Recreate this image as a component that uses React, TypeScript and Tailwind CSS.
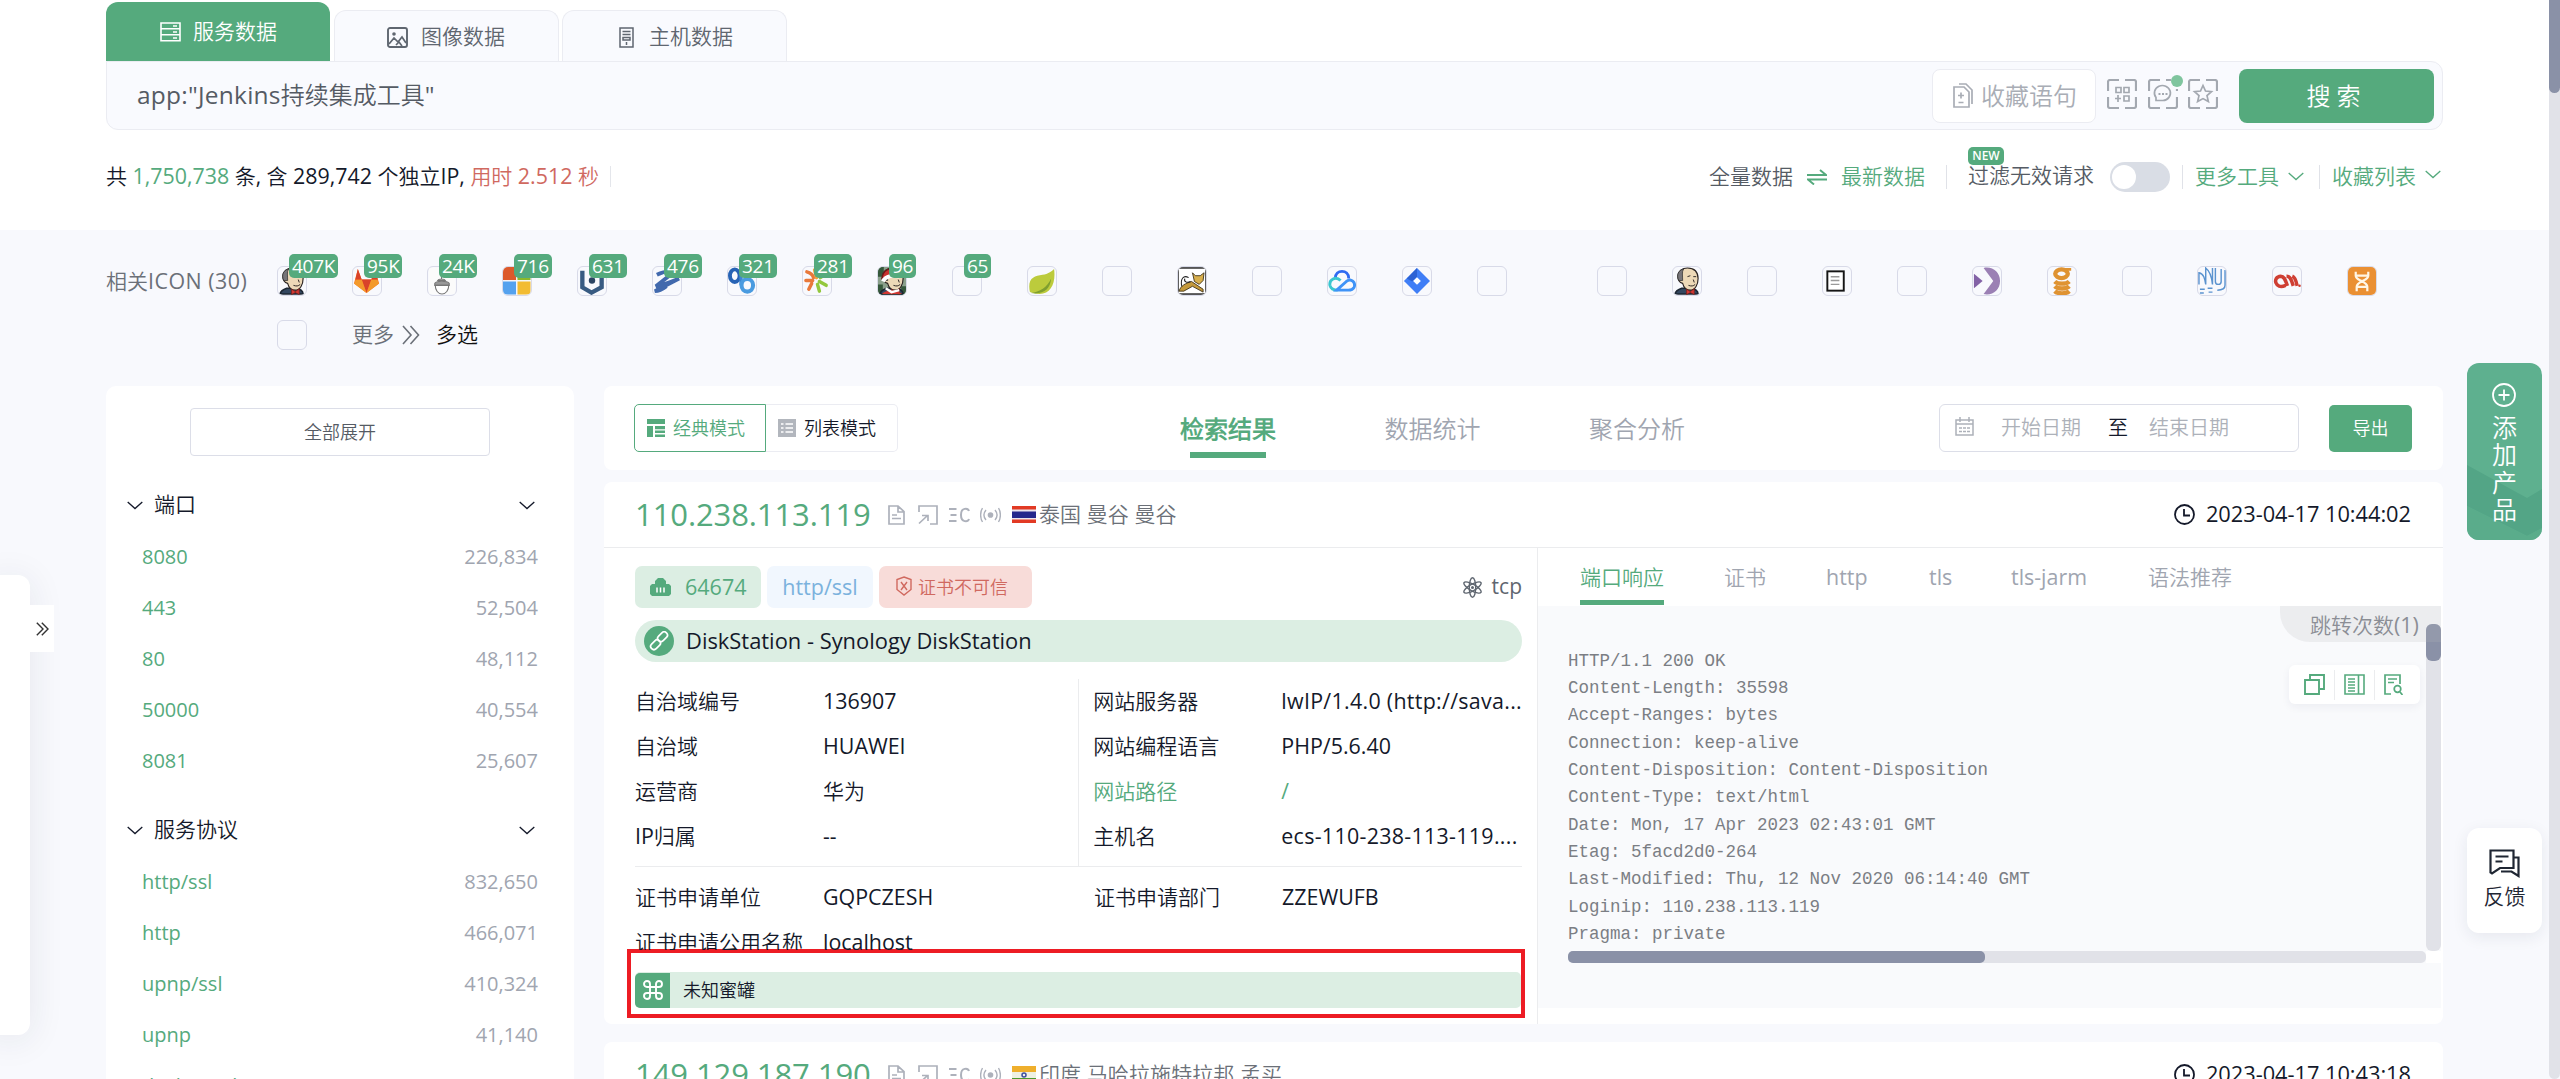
import React from 'react';

type P = { children?: React.ReactNode; className?: string };

/* Latin runs are set slightly larger than the Chinese around them */
const L = ({ children, className = '' }: P) => (
  <span className={`text-[1.02em] ${className}`}>{children}</span>
);

const Svg = ({ w, h, vb, children, className = '' }: P & { w: number; h: number; vb?: string }) => (
  <svg width={w} height={h} viewBox={vb ?? `0 0 ${w} ${h}`} preserveAspectRatio="none" fill="none" stroke="currentColor" strokeWidth="1.5" className={`shrink-0 ${className}`}>
    {children}
  </svg>
);

const Chevron = ({ className = '' }: P) => (
  <Svg w={16} h={9} className={className}><path d="M.7 1 8 7.6 15.3 1" strokeWidth="1.3" /></Svg>
);

/* ---------- favicons ---------- */
const Butler = () => (
  <>
    <path d="M2 28c1-4 4-5 7-6l10 0c4 1 7 2 7 6z" fill="#33475f" stroke="#1d2733" />
    <path d="M5 10C5 4 10 1 15 1c7 0 11 4 11 11 0 6-3 12-8 12-4 0-7-3-8-7-3-1-5-3-5-7z" fill="#edd9b7" stroke="#2b2422" strokeWidth="1.200" />
    <path d="M6 14C3 8 6 3 11 2c-2 3-1 7-1 12z" fill="#777579" stroke="#333" strokeWidth=".8" />
    <path d="M15 10l3-1M21 10l3 0M21 13l1 3M16 19c3 1 5 1 7-1" stroke="#2b2422" strokeWidth="1" />
    <path d="M14 23l4 2.5 4-3v6l-4-2-4 2z" fill="#d33833" stroke="#7c1d18" strokeWidth=".7" />
  </>
);

const icons: Record<string, React.ReactNode> = {
  jenkins: <Butler />,
  gitlab: (
    <g stroke="none">
      <path d="M14 27 1 17 5 2l4 11h10L23 2l4 15z" fill="#fc6d26" />
      <path d="M14 27 9 13h10z" fill="#d9432a" />
      <path d="M14 27 1 17l2-4h6zM14 27l13-10-2-4h-6z" fill="#f39a2c" />
      <path d="M5 2l4 11H2.500zM23 2l-4 11h6.500z" fill="#d9432a" />
    </g>
  ),
  gitea: (
    <g stroke="#777" strokeWidth="1.1">
      <rect x="1" y="1" width="27" height="27" fill="#fbfbfb" stroke="none" />
      <path d="M14 9v4M10 14c1-2 7-2 8 0z" fill="#bbb" />
      <path d="M7 17c1-3 13-3 15 0v2H7z" fill="#999" />
      <path d="M7.500 19c0 5 3 9 7 9s7-4 7-9z" fill="#fff" />
    </g>
  ),
  windows: (
    <g stroke="none">
      <rect width="13.500" height="13.500" fill="#dc5a2b" /><rect x="15" width="13.500" height="13.500" fill="#8cb82b" />
      <rect y="15" width="13.500" height="13.500" fill="#55a2ee" /><rect x="15" y="15" width="13.500" height="13.500" fill="#f2bc32" />
    </g>
  ),
  hexagon: (
    <>
      <path d="M4.500 4v17L14 26.500 24.500 21V4" stroke="#385b82" strokeWidth="4.500" />
      <circle cx="14.500" cy="14" r="3.300" fill="#2b4563" stroke="none" />
    </>
  ),
  zigzag: <path d="M4 8c6-3 13-4 18-3L3 20c6-1 17-5 24-8L2 25c3 0 8-2 12-5" stroke="#4169ad" strokeWidth="4" />,
  rings: (
    <>
      <ellipse cx="7" cy="9" rx="5" ry="6.500" stroke="#2763b5" strokeWidth="4" />
      <path d="M13.500 3v16" stroke="#3d86d2" strokeWidth="3.500" />
      <ellipse cx="20" cy="19" rx="6" ry="6.500" stroke="#4a9be0" strokeWidth="4.200" />
    </>
  ),
  petals: (
    <g strokeWidth="3.600" strokeLinecap="round">
      <path d="M4 5c4 1 6 3 7 6M3 14l7 0M9 17l-3 6" stroke="#e9793b" /><path d="M12 3l2 8" stroke="#f0a33c" />
      <path d="M15 18l2 7M17 15l7 4M18 11l7-5" stroke="#93c83e" />
    </g>
  ),
  santa: (
    <>
      <rect width="29" height="29" fill="#8aa08b" stroke="none" />
      <path d="M0 0h6v10H0zM0 18h5v11H0zM24 20h5v9h-5z" fill="#35583b" stroke="none" />
      <Butler />
      <path d="M4 12C5 3 12 0 19 3l5 5-14 2z" fill="#c8322f" stroke="#6b1b19" />
      <path d="M5 15c3-6 11-7 17-5" stroke="#fff" strokeWidth="4" />
      <path d="M4 28c4-5 15-5 21 0z" fill="#d33833" stroke="none" /><path d="M8 22l6 4 8-2" stroke="#fff" strokeWidth="2.500" />
    </>
  ),
  leaf: (
    <g stroke="none">
      <path d="M2 26C-1 12 6 9 15 8c6-1 9-3 12-6 2 14-3 26-15 26-4 0-7-1-10-2z" fill="#bccb3c" />
      <path d="M3 27c9-1 17-6 21-15-1 11-8 17-21 15z" fill="#7f9f2f" />
    </g>
  ),
  tomcat: (
    <>
      <rect x="0" y="1" width="29" height="27" fill="#fff" stroke="#222" strokeWidth="1.500" />
      <path d="M1 25c2-6 7-8 13-10l12 8v3l-11-6-9 5z" fill="#c59a3c" stroke="#3a2d14" strokeWidth=".9" />
      <path d="M15 6l3 3h5l4-3-1 8-4 4-5-3z" fill="#d9b04d" stroke="#3a2d14" strokeWidth=".9" />
      <path d="M4 20C2 12 6 8 11 11M7 12c-1 3 2 5 6 3" stroke="#222" strokeWidth="1.100" />
    </>
  ),
  cloud: (
    <g strokeWidth="3">
      <path d="M7.500 12c0-10 14-10 14 0" stroke="#2f6bf2" />
      <path d="M13 14c-5-5-12-1-11 5 1 4 4 5 8 5" stroke="#3ac6cf" />
      <path d="M9 24l10-9c5-4 10 1 8 6-1 2-3 3-6 3z" stroke="#3f93f7" />
    </g>
  ),
  jira: (
    <g stroke="none">
      <path d="M14.500 1 28 14.500 14.500 28 1 14.500z" fill="#3f7ef6" /><path d="M14.500 1v9l-5 5L4 12z" fill="#2c62d4" />
      <path d="M14.500 10.500l4 4-4 4-4-4z" fill="#fff" />
    </g>
  ),
  page: (
    <>
      <rect x="4.500" y="4.500" width="17" height="20" fill="#fff" stroke="#151515" strokeWidth="2" />
      <path d="M8 10h9M8 14h9M8 18h9" stroke="#999" />
    </>
  ),
  visual: (
    <g stroke="none">
      <path d="M1 7l9 7.500L1 22z" fill="#8362a6" />
      <path d="M11 1c9-2 17 4 17 13.500S20 30 11 28l10-13.500z" fill="#9b80b4" />
    </g>
  ),
  grafana: (
    <g stroke="#df9332" strokeWidth="4.500">
      <ellipse cx="14" cy="7" rx="6.500" ry="4.500" /><path d="M17 2.500h7" strokeWidth="3" /><path d="M7 15c3 3 12 3 15 0M7 20c3 3 12 3 15 0M7 25c3 3 12 3 15 0" />
    </g>
  ),
  waves: (
    <g stroke="#5b93cf" strokeWidth="1.500">
      <path d="M1 18V6c5 1 6 6 7 12V1c4 3 6 7 7 17V1M18 1v14c0 4 6 4 6 0V2M28 3v16c0 4-3 5-8 5" />
      <path d="M2 23h5M10 22h5M11 26h4M2 27h4" />
    </g>
  ),
  aa: (
    <>
      <path d="M13 19C2 24-1 10 8 9.500c4 0 5 5 7 10M14 9.500c4 0 5 4 7 10M20 9.500c3 1 4 5 5 10" stroke="#cf3f33" strokeWidth="3.600" /><circle cx="27.500" cy="19.500" r="1.300" fill="#cf3f33" stroke="none" />
    </>
  ),
  dna: (
    <>
      <rect width="29" height="29" fill="#ea9033" stroke="none" />
      <path d="M8 5v4c0 3 3 4 6 5.500s6 3 6 6V25M21 5v4c0 3-3 4-6 5.500s-6 3-6 6V25M9 9h11M9 20.500h11" stroke="#fff6e6" strokeWidth="2.300" />
    </>
  ),
  none: null,
};

const favs: [string, string?][] = [
  ['jenkins', '407K'], ['gitlab', '95K'], ['gitea', '24K'], ['windows', '716'], ['hexagon', '631'], ['zigzag', '476'],
  ['rings', '321'], ['petals', '281'], ['santa', '96'], ['none', '65'], ['leaf'], ['none'], ['tomcat'], ['none'],
  ['cloud'], ['jira'], ['none'], ['gap'], ['none'], ['jenkins'], ['none'], ['page'], ['none'], ['visual'], ['grafana'],
  ['none'], ['waves'], ['aa'], ['dna'],
];

const Fav = ({ name, count }: { name: string; count?: string }) => (
  <div className="relative h-[30px] w-[30px] shrink-0">
    <div className="h-[30px] w-[30px] overflow-hidden rounded-[6px] border border-[#d8dae8]">
      <Svg w={28} h={28} vb="0 0 29 29">{icons[name]}</Svg>
    </div>
    {count && (
      <div className="absolute -top-[12px] left-[12px] h-[24px] rounded-[5px] bg-[#55aa7d] px-[3px] text-[19px] leading-[24px] tracking-[-0.3px] text-white">{count}</div>
    )}
  </div>
);

/* ---------- header ---------- */
const Header = () => (
  <div className="h-[230px] bg-white pl-[106px]">
    <div className="flex h-[61px] items-end gap-[4px]">
      <div className="flex h-[59px] w-[224px] items-center rounded-t-[12px] bg-[#55aa7d] pl-[54px] text-[21px] text-white">
        <Svg w={21} h={20}><path d="M1 1h19v5.800H1zM1 6.800h19v6H1zM1 12.800h19v6H1zM13 4h4M13 10h4M13 16h4" strokeWidth="1.600" /></Svg>
        <span className="ml-[12px]">服务数据</span>
      </div>
      <div className="flex h-[51px] w-[225px] items-center rounded-t-[12px] border border-b-0 border-[#ebecf2] bg-[#f9fafe] pl-[52px] pt-[2px] text-[21px] text-[#5f6670]">
        <Svg w={21} h={21}><rect x="1" y="1" width="19" height="19" rx="2" strokeWidth="1.900" /><circle cx="7" cy="7" r="1.800" fill="currentColor" stroke="none" /><path d="M2 17l5-6 4 4 4-5 4 6M9 18l3-3 3 4" strokeWidth="1.700" /></Svg>
        <span className="ml-[13px]">图像数据</span>
      </div>
      <div className="-ml-[1px] flex h-[51px] w-[225px] items-center rounded-t-[12px] border border-b-0 border-[#ebecf2] bg-[#f9fafe] pl-[56px] pt-[2px] text-[21px] text-[#5f6670]">
        <Svg w={15} h={21}><path d="M1 1h13v19H1zM3.500 4.500h8M3.500 7.500h8M4 10.500h7v2.500H4zM7.500 15v3" strokeWidth="1.500" /></Svg>
        <span className="ml-[15px]">主机数据</span>
      </div>
    </div>
    <div className="flex h-[69px] w-[2337px] items-center rounded-b-[12px] rounded-tr-[12px] border border-[#ebecf2] bg-[#f9fafe] pr-[8px] pl-[30px]">
      <div className="grow text-[24px] text-[#555b64]"><L className="tracking-[0.25px]">app:"Jenkins</L>持续集成工具<L>"</L></div>
      <div className="flex h-[54px] w-[164px] items-center rounded-[8px] border border-[#ebecf2] bg-white pl-[20px] text-[24px] text-[#a9adb5]">
        <Svg w={20} h={25}><path d="M1 4h10l5 5v15H1zM6 1h7l6 6v14M5 12.500h6M8 9.500v6M5.500 19.500h5" strokeWidth="1.700" /></Svg>
        <span className="ml-[8px]">收藏语句</span>
      </div>
      <div className="mt-[-3px] ml-[11px] flex gap-[10.500px] text-[#a3a8b0]">
        <Svg w={30} h={30}><path d="M12 1H3a2 2 0 0 0-2 2v9M18 1h9a2 2 0 0 1 2 2v9M1 18v9a2 2 0 0 0 2 2h9M29 18v9a2 2 0 0 1-2 2h-9" strokeWidth="2.200" /><path d="M9 8.500h5v5H9zM17 8.500h5v5h-5zM17 17h5v5h-5zM8 19.500h6M11 16v7" strokeWidth="1.700" /></Svg>
        <div className="relative">
          <Svg w={30} h={30}><path d="M12 1H3a2 2 0 0 0-2 2v9M18 1h5M29 10v2M1 18v9a2 2 0 0 0 2 2h9M29 18v9a2 2 0 0 1-2 2h-9" strokeWidth="2.200" /><path d="M8 21.500h7a8 7.500 0 1 0-7-3z" strokeWidth="1.700" /><path d="M10.500 15h2M14 15h2M17.500 15h2" strokeWidth="2" /></Svg>
          <div className="absolute -top-[4px] right-[-5px] h-[12px] w-[12px] rounded-full bg-[#7fc59e]" />
        </div>
        <Svg w={30} h={30}><path d="M12 1H3a2 2 0 0 0-2 2v9M18 1h9a2 2 0 0 1 2 2v9M1 18v9a2 2 0 0 0 2 2h9M29 18v9a2 2 0 0 1-2 2h-9" strokeWidth="2.200" /><path d="M15 6.500l2.500 5.500 6 .600-4.500 4 1.400 6-5.400-3-5.400 3 1.400-6-4.500-4 6-.6z" strokeWidth="1.700" /></Svg>
      </div>
      <div className="ml-[21px] flex h-[54px] w-[195px] items-center justify-center rounded-[8px] bg-[#55aa7d] pr-[6px] text-[24px] font-medium text-white">搜&nbsp;索</div>
    </div>
    <div className="flex h-[93px] w-[2337px] items-center justify-between text-[21px] text-[#14192a]">
      <div className="flex items-center">
        <span className="whitespace-pre">共 <L className="text-[#55aa7d]">1,750,738</L> 条, 含 <L>289,742</L> 个独立<L>IP,</L> <span className="text-[#d0695f]">用时 <L>2.512</L> 秒</span></span>
        <div className="ml-[11px] h-[21px] w-px bg-[#e4e6eb]" />
      </div>
      <div className="flex items-center pr-[2px] text-[#555b64]">
        全量数据
        <Svg w={20} h={16} className="mx-[14px] text-[#55aa7d]"><path d="M0 6h19l-6-5M20 10.500H1l6 5" strokeWidth="1.900" /></Svg>
        <span className="text-[#55aa7d]">最新数据</span>
        <div className="ml-[21px] h-[24px] w-px bg-[#e0e2e8]" />
        <div className="relative ml-[21px] mt-[-2px]">
          过滤无效请求
          <div className="absolute -top-[13px] left-0 h-[18px] w-[36px] rounded-[5px] bg-[#55aa7d] text-center text-[12px] leading-[18px] font-semibold text-white">NEW</div>
        </div>
        <div className="ml-[16px] flex h-[30px] w-[60px] items-center rounded-full bg-[#d9dde5] pl-[2px]"><div className="h-[24px] w-[24px] rounded-full bg-white" /></div>
        <div className="ml-[12px] h-[24px] w-px bg-[#e0e2e8]" />
        <span className="ml-[12px] text-[#55aa7d]">更多工具</span><Chevron className="ml-[9px] text-[#55aa7d]" />
        <div className="ml-[15px] h-[24px] w-px bg-[#e0e2e8]" />
        <span className="ml-[12px] text-[#55aa7d]">收藏列表</span><Chevron className="mt-[-4px] ml-[9px] text-[#55aa7d]" />
      </div>
    </div>
  </div>
);

/* ---------- left facets ---------- */
const Facet = ({ title, rows, className = '' }: { title: string; rows: [string, string][]; className?: string }) => (
  <div className={className}>
    <div className="flex h-[52px] items-center pr-[39px] pl-[21px] text-[#14192a]">
      <Chevron /><span className="ml-[11px] grow text-[21px]">{title}</span><Chevron />
    </div>
    {rows.map(([k, v]) => (
      <div key={k} className="flex h-[51px] items-center justify-between pr-[36px] pl-[36px] text-[20px]">
        <span className="text-[#55aa7d]">{k}</span><span className="text-[#a0a5b0]">{v}</span>
      </div>
    ))}
  </div>
);

/* ---------- result pieces ---------- */
const IpHeader = ({ ip, place, time, flag }: { ip: string; place: string; time: string; flag: React.ReactNode }) => (
  <div className="flex h-[66px] items-center border-b border-[#ebecee] pr-[32px] pl-[31px]">
    <span className="w-[253px] text-[31px] tracking-[-0.1px] text-[#55aa7d]">{ip}</span>
    <div className="flex grow items-center text-[#adb1bb]">
      <Svg w={17} h={20}><path d="M1 1h9l6 5.500V19H1zM10 1v6h6M4 10h5M4 13.500h9" strokeWidth="1.700" /></Svg>
      <Svg w={20} h={20} className="ml-[13px]"><path d="M1 7V1h18v18h-7M1 18.500 9 11M4 10.500h6V16" strokeWidth="1.700" /></Svg>
      <Svg w={21} h={16} className="ml-[11px]"><path d="M0 2h7.500M1.500 8h6M0 14h7.500M20 4c-1-3-8-4-8 4s7 7 8 4" strokeWidth="2" /></Svg>
      <Svg w={21} h={16} className="ml-[10px]"><circle cx="10.500" cy="8" r="2.800" fill="currentColor" stroke="none" /><path d="M6 3c-2.500 3-2.500 7 0 10M15 3c2.500 3 2.500 7 0 10M2.500 1C0 5 0 11 2.500 15M18.500 1c2.500 4 2.500 10 0 14" strokeWidth="1.400" /></Svg>
      <div className="ml-[11px] h-[17px] w-[24px] overflow-hidden">{flag}</div>
      <span className="ml-[3px] text-[21px] tracking-[0.100px] text-[#6b7078]">{place}</span>
    </div>
    <div className="flex items-center text-[#14192a]">
      <Svg w={21} h={21}><circle cx="10.500" cy="10.500" r="9.500" strokeWidth="1.800" /><path d="M10 5v6.500h6" strokeWidth="1.800" /></Svg>
      <span className="ml-[11px] text-[21.800px] tracking-[-0.03px]">{time}</span>
    </div>
  </div>
);

const Row = ({ k, v, c = '' }: { k: React.ReactNode; v: React.ReactNode; c?: string }) => (
  <div className={`flex h-[45px] items-center text-[21px] ${c}`}>
    <span className="w-[188px] shrink-0 whitespace-nowrap">{k}</span><span className="whitespace-nowrap">{v}</span>
  </div>
);

const code = [
  'HTTP/1.1 200 OK', 'Content-Length: 35598', 'Accept-Ranges: bytes', 'Connection: keep-alive',
  'Content-Disposition: Content-Disposition', 'Content-Type: text/html', 'Date: Mon, 17 Apr 2023 02:43:01 GMT',
  'Etag: 5facd2d0-264', 'Last-Modified: Thu, 12 Nov 2020 06:14:40 GMT', 'Loginip: 110.238.113.119', 'Pragma: private',
];

const Toolbar = () => (
  <div className="flex h-[84px] w-[1839px] items-center rounded-[8px] bg-white pr-[31px] pl-[30px]">
    <div className="flex text-[18px]">
      <div className="flex h-[48px] w-[132px] items-center rounded-l-[5px] border border-[#55aa7d] pl-[12px] text-[#55aa7d]">
        <Svg w={18} h={18}><path d="M0 0h18v5H0zM0 7h6v11H0zM8 7h10v3.200H8zM8 11.500h10v2.500H8zM8 15.500h10V18H8z" fill="currentColor" stroke="none" /></Svg>
        <span className="ml-[8px]">经典模式</span>
      </div>
      <div className="flex h-[48px] w-[132px] items-center rounded-r-[5px] border border-l-0 border-[#ebecf2] pl-[12px] text-[#14192a]">
        <Svg w={18} h={18} className="text-[#b2b6bd]"><rect width="18" height="18" fill="currentColor" stroke="none" /><path d="M3 5h2.500M7.500 5H15M3 9h2.500M7.500 9H15M3 13h2.500M7.500 13H15" stroke="#fff" /></Svg>
        <span className="ml-[8px]">列表模式</span>
      </div>
    </div>
    <div className="mt-px ml-[282px] flex grow gap-[108.500px] text-[24px] text-[#a0a5b0]">
      <div className="relative font-bold text-[#55aa7d]">检索结果<div className="absolute top-[41px] left-[10px] h-[6px] w-[76px] bg-[#55aa7d]" /></div>
      <div>数据统计</div>
      <div>聚合分析</div>
    </div>
    <div className="flex h-[48px] w-[360px] items-center rounded-[6px] border border-[#dcdee8] pl-[15px] text-[20px] text-[#adb1b9]">
      <Svg w={19} h={19} className="-mt-[3px]"><path d="M1 3h17v15H1zM1 7h17M5 0v5M14 0v5M4 11h3M8 11h3M12 11h3M4 14.500h3M8 14.500h3M12 14.500h3" strokeWidth="1.500" /></Svg>
      <span className="ml-[27px]">开始日期</span><span className="ml-[27px] text-[#14192a]">至</span><span className="ml-[21px]">结束日期</span>
    </div>
    <div className="ml-[30px] flex h-[47px] w-[83px] items-center justify-center rounded-[5px] bg-[#55aa7d] text-[18px] text-white">导出</div>
  </div>
);

const Card = () => (
  <div className="mt-[12px] h-[542px] w-[1839px] rounded-[8px] bg-white">
    <IpHeader ip="110.238.113.119" place="泰国 曼谷 曼谷" time="2023-04-17 10:44:02" flag={
      <Svg w={24} h={17} className="block"><path d="M0 0h24v17H0z" fill="#e23a24" stroke="none" /><path d="M0 3.500h24v10H0z" fill="#e9e4ee" stroke="none" /><path d="M0 5.500h24v6.500H0z" fill="#24278c" stroke="none" /></Svg>
    } />
    <div className="flex h-[476px]">
      <div className="w-[934px] border-r border-[#ebecee] pt-[18px] pr-[15px] pl-[31px]">
        <div className="flex h-[42px] items-center text-[21px]">
          <div className="flex h-[42px] w-[126px] items-center rounded-[7px] bg-[#dceee3] pl-[15px] text-[#55aa7d]">
            <Svg w={21} h={18}><path d="M2 6h3V3l3-3h5l3 3v3h3l2 2v8l-2 2H2l-2-2V8z" fill="currentColor" stroke="none" /><path d="M7 9.500v5M10.500 9.500v5M14 9.500v5" stroke="#fff" /></Svg>
            <span className="ml-[14px] text-[21.500px]">64674</span>
          </div>
          <div className="ml-[6px] flex h-[42px] w-[106px] items-center justify-center rounded-[7px] bg-[#f1f7fe] text-[21.500px] text-[#7bb2dd]">http/ssl</div>
          <div className="ml-[6px] flex h-[42px] w-[153px] items-center rounded-[7px] bg-[#f8dcd9] pl-[17px] text-[18px] text-[#d0695f]">
            <Svg w={16} h={20} className="mt-[-3px]"><path d="M8 1l7 2.500v10L8 19l-7-5.500v-10zM5 6l6 8M11 6l-6 8" strokeWidth="1.400" /></Svg>
            <span className="mt-px ml-[6px]">证书不可信</span>
          </div>
          <div className="flex grow items-center justify-end text-[21px] text-[#5f6670]">
            <Svg w={19} h={21}><g strokeWidth="1.400"><ellipse cx="9.500" cy="10.500" rx="3.200" ry="9.800" /><ellipse cx="9.500" cy="10.500" rx="3.200" ry="9.800" transform="rotate(60 9.500 10.500)" /><ellipse cx="9.500" cy="10.500" rx="3.200" ry="9.800" transform="rotate(-60 9.500 10.500)" /></g><circle cx="9.500" cy="10.500" r="1.500" fill="currentColor" stroke="none" /></Svg>
            <span className="ml-[10px]">tcp</span>
          </div>
        </div>
        <div className="mt-[12px] flex h-[42px] items-center rounded-full bg-[#dceee3] pl-[9px] text-[21.900px] text-[#14192a]">
          <div className="flex h-[30px] w-[30px] items-center justify-center rounded-full bg-[#55aa7d] text-white">
            <Svg w={20} h={20}><g strokeWidth="1.700"><rect x="8" y="2.500" width="11" height="6.500" rx="3.200" transform="rotate(-45 13.500 5.700)" /><rect x="1" y="10.500" width="11" height="6.500" rx="3.200" transform="rotate(-45 6.500 13.700)" /></g></Svg>
          </div>
          <span className="ml-[12px]">DiskStation - Synology DiskStation</span>
        </div>
        <div className="mt-[17px] flex border-b border-[#ebecee] text-[#14192a]">
          <div className="h-[187px] w-[445px] border-r border-[#ebecee] pb-[7px]">
            <Row k="自治域编号" v={<L>136907</L>} /><Row k="自治域" v={<L>HUAWEI</L>} /><Row k="运营商" v="华为" /><Row k={<><L>IP</L>归属</>} v="--" />
          </div>
          <div className="pl-[14px]">
            <Row k="网站服务器" v={<L className="tracking-[0.3px]">lwIP/1.4.0 (http://sava...</L>} /><Row k="网站编程语言" v={<L>PHP/5.6.40</L>} />
            <Row k="网站路径" v="/" c="text-[#55aa7d]" /><Row k="主机名" v={<L className="tracking-[0.3px]">ecs-110-238-113-119....</L>} />
          </div>
        </div>
        <div className="h-[83px] overflow-hidden pt-[8px] text-[#14192a]">
          <div className="flex"><div className="w-[459px]"><Row k="证书申请单位" v={<L>GQPCZESH</L>} /></div><Row k="证书申请部门" v={<L>ZZEWUFB</L>} /></div>
          <Row k="证书申请公用名称" v={<L>localhost</L>} />
        </div>
        <div className="-mt-[1px] -ml-[8px] h-[69px] w-[898px] border-[4px] border-[#ed1c24] bg-white pt-[19px] pl-[4px]">
          <div className="flex h-[36px] w-[886px] items-center rounded-[5px] bg-[#dceee3] text-[18px] text-[#14192a]">
            <div className="flex h-[35px] w-[35px] items-center justify-center rounded-l-[5px] bg-[#55aa7d] text-white">
              <Svg w={20} h={20}><path d="M7 7h6v6H7zM7 7H4a3 3 0 1 1 3-3zM13 7V4a3 3 0 1 1 3 3zM7 13v3a3 3 0 1 1-3-3zM13 13h3a3 3 0 1 1-3 3z" strokeWidth="1.900" /></Svg>
            </div>
            <span className="ml-[13px]">未知蜜罐</span>
          </div>
        </div>
      </div>

      <div className="w-[903px]">
        <div className="flex h-[58px] pt-[12px] pl-[42px] text-[21px] leading-[34px] text-[#a0a5b0]">
          <div className="h-[45px] w-[84px] border-b-[5px] border-[#55aa7d] text-[#55aa7d]">端口响应</div>
          <div className="ml-[60px] w-[102px]">证书</div>
          <div className="w-[103px]"><L>http</L></div>
          <div className="w-[82px]"><L>tls</L></div>
          <div className="w-[137px]"><L>tls-jarm</L></div>
          <div>语法推荐</div>
        </div>
        <div className="relative h-[402px] bg-[#f9fafc]">
          <div className="flex h-[345px] pt-[18px] pl-[30px]">
            <pre className="h-[327px] w-[858px] overflow-hidden pt-[23.500px] font-['Liberation_Mono','Noto_Sans_CJK_SC',monospace] text-[17.500px] leading-[27.350px] text-[#7b7e84]">{code.join('\n')}</pre>
            <div className="h-[327px] w-[15px] rounded-[6px] bg-[#e1e2e8]"><div className="h-[37px] rounded-[6px] bg-[#8a91a7]" /></div>
          </div>
          <div className="flex bg-white"><div className="h-[12px] w-[888px] bg-[#f9fafc] pl-[30px]"><div className="h-[12px] w-[858px] rounded-[5px] bg-[#e1e2e8]"><div className="h-[12px] w-[417px] rounded-[5px] bg-[#8a91a7]" /></div></div></div>
          <div className="absolute top-0 right-0 h-[36px] w-[161px] rounded-bl-[30px] bg-[#b8b8c0]/20 pl-[30px] text-[21px] leading-[37px] text-[#8b8e95]">跳转次数<L>(1)</L></div>
          <div className="absolute top-[59px] right-[21px] flex h-[39px] w-[131px] items-center rounded-[6px] bg-white pl-[15px] text-[#55aa7d] shadow-[0_3px_8px_rgba(30,40,80,0.06)]">
            <Svg w={21} h={21}><path d="M1 6h14v14H1zM6 5V1h14v14h-4" strokeWidth="1.900" /></Svg>
            <div className="mx-[9px] h-[30px] w-px bg-[#ebecee]" />
            <Svg w={21} h={21}><path d="M1 1h19v19H1zM14.500 1v19M4 5h7M4 8h7M4 11h7M4 14h7M4 17h7" strokeWidth="1.600" /></Svg>
            <div className="mx-[9px] h-[30px] w-px bg-[#ebecee]" />
            <Svg w={19} h={21}><path d="M7 20H1V1h15v9M4 5h9M4 8.500h6M16 18l2.500 3" strokeWidth="1.700" /><circle cx="13.500" cy="15" r="3.300" strokeWidth="1.700" /></Svg>
          </div>
        </div>
      </div>
    </div>
  </div>
);

export default function App() {
  return (
    <div className="relative h-[1079px] w-[2560px] overflow-hidden bg-[#f8f9fd] font-['Open_Sans','Noto_Sans_CJK_SC_DemiLight','Noto_Sans_CJK_SC',sans-serif]">
      <Header />
      <div className="h-[156px] pt-[36px] pl-[106px] text-[21px] text-[#6b7078]">
        <div className="flex h-[30px] items-center">
          <div className="w-[171px] shrink-0 whitespace-nowrap">相关<L className="tracking-[0.5px]">ICON (30)</L></div>
          <div className="flex gap-[45px]">
            {favs.map(([n, c], i) => (n === 'gap' ? <div key={i} className="w-0" /> : <Fav key={i} name={n} count={c} />))}
          </div>
        </div>
        <div className="mt-[24px] flex h-[30px] items-center pl-[171px]">
          <Fav name="none" />
          <span className="ml-[45px]">更多</span>
          <Svg w={18} h={20} className="ml-[8px]"><path d="M1 1l8 9-8 9M8.500 1l8 9-8 9" strokeWidth="1.600" /></Svg>
          <span className="ml-[16px] text-[#111]">多选</span>
        </div>
      </div>

      <div className="flex gap-[30px] pl-[106px]">
        <div className="h-[720px] w-[468px] rounded-t-[10px] bg-white pt-[22px]">
          <div className="mx-auto flex h-[48px] w-[300px] items-center justify-center rounded-[4px] border border-[#dcdee8] text-[18px] text-[#555b64]">全部展开</div>
          <Facet className="mt-[23px]" title="端口" rows={[['8080', '226,834'], ['443', '52,504'], ['80', '48,112'], ['50000', '40,554'], ['8081', '25,607']]} />
          <Facet className="mt-[18px]" title="服务协议" rows={[['http/ssl', '832,650'], ['http', '466,071'], ['upnp/ssl', '410,324'], ['upnp', '41,140'], ['docker/ssl', '494']]} />
        </div>
        <div>
          <Toolbar />
          <Card />
          <div className="mt-[18px] h-[542px] rounded-[8px] bg-white">
            <IpHeader ip="149.129.187.190" place="印度 马哈拉施特拉邦 孟买" time="2023-04-17 10:43:18" flag={
              <Svg w={24} h={17} className="block"><path d="M0 0h24v6H0z" fill="#efaf2d" stroke="none" /><path d="M0 6h24v6H0z" fill="#eef0e4" stroke="none" /><path d="M0 12h24v5H0z" fill="#4c9a2e" stroke="none" /><circle cx="12" cy="9" r="2" stroke="#3d4ea1" /></Svg>
            } />
          </div>
        </div>
      </div>

      {/* collapsed drawer on the left edge */}
      <div className="absolute top-[575px] -left-[12px] h-[460px] w-[42px] rounded-[12px] bg-white shadow-[0_4px_36px_rgba(30,40,70,0.09)]" />
      <div className="absolute top-[605px] left-[30px] flex h-[47px] w-[24px] items-center justify-center bg-white text-[#333]">
        <Svg w={13} h={14}><path d="M.8.800 7 7 .800 13.200M5.800.800 12 7l-6.200 6.200" strokeWidth="1.400" /></Svg>
      </div>

      {/* floating actions on the right edge */}
      <div className="absolute top-[363px] left-[2467px] flex h-[177px] w-[75px] flex-col items-center overflow-hidden rounded-[12px] bg-[#5eb08f] pt-[20px] text-[25px] leading-[27.300px] text-white">
        <svg className="absolute inset-0" width="75" height="177"><path d="M0 102l60 33 15-9v39l-15 8L0 143z" fill="#53a586" /><path d="M0 143l60 30 15-8v12H0z" fill="#5aac8b" /></svg>
        <Svg w={24} h={24} className="relative mr-px mb-[7px]"><circle cx="12" cy="12" r="11" strokeWidth="1.800" /><path d="M12 6.500v11M6.500 12h11" strokeWidth="1.800" /></Svg>
        <div className="relative w-[25px] break-all">添加产品</div>
      </div>
      <div className="absolute top-[828px] left-[2467px] flex h-[105px] w-[75px] flex-col items-center rounded-[12px] bg-white pt-[21px] text-[21px] leading-[36px] text-[#1f2633] shadow-[0_4px_16px_rgba(30,40,70,0.08)]">
        <Svg w={31} h={29}><path d="M1.500 1.500h23V19H11l-8 5.500-1.500-1zM25 8.500h4.500V27l-7-4.500H12M6.500 7.500h13M6.500 12.500h7" strokeWidth="2.200" /></Svg>
        反馈
      </div>
      <div className="absolute top-0 right-0 h-[1079px] w-[11px] rounded-b-[6px] bg-[#e1e2e8]"><div className="h-[93px] rounded-b-[6px] bg-[#8a91a7]" /></div>
    </div>
  );
}
